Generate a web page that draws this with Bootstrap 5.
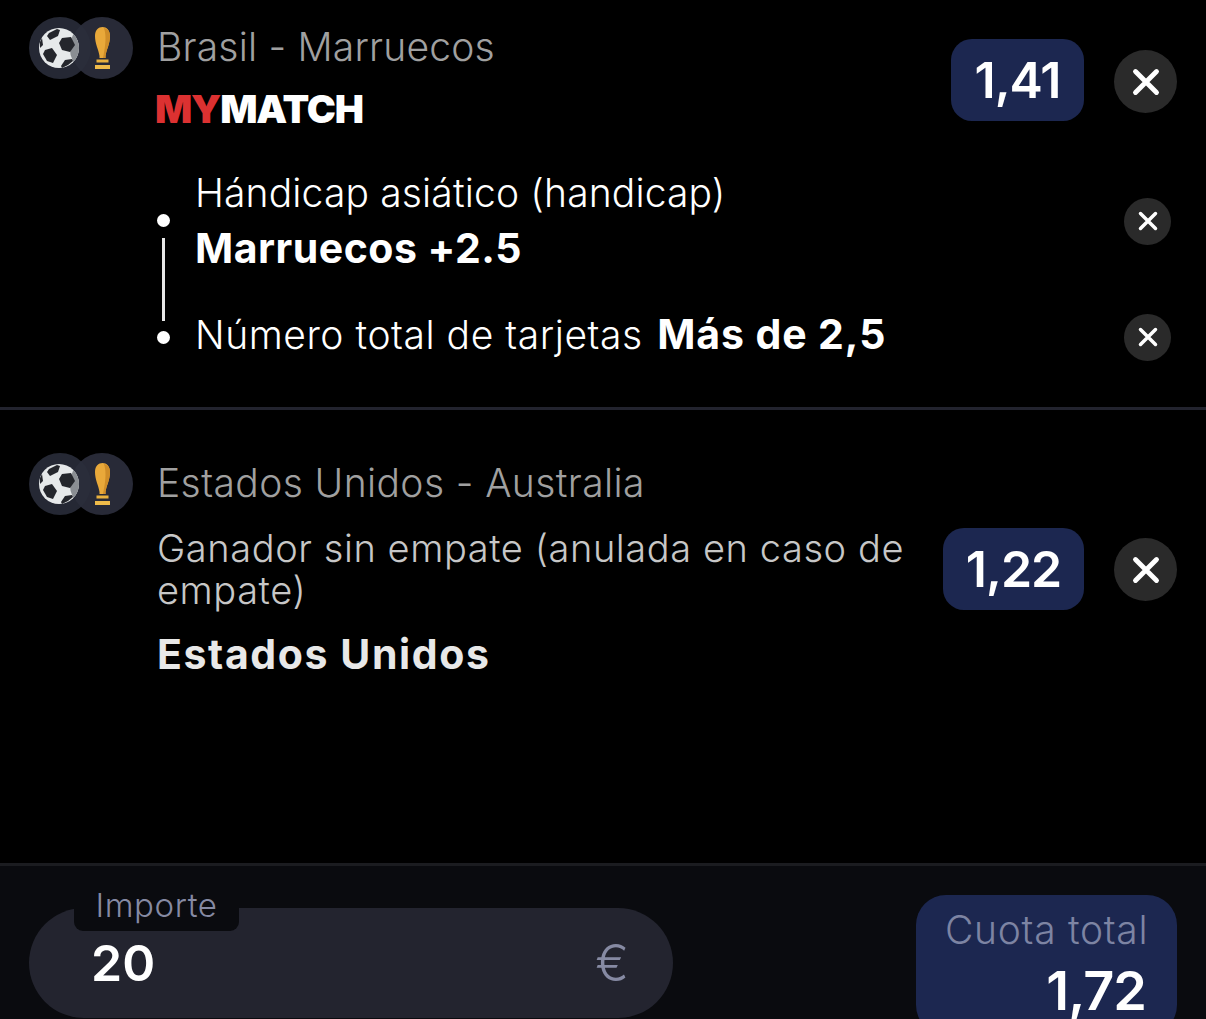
<!doctype html>
<html lang="es"><head><meta charset="utf-8">
<link href="https://cdn.jsdelivr.net/npm/bootstrap@5.3.0/dist/css/bootstrap.min.css" rel="stylesheet">
<style>
html,body{height:100%}
body{background:#000;color:#fff;font-family:Inter,"Noto Sans",sans-serif;overflow:hidden;width:1206px;height:1019px}
.page{height:1019px}
.slip{padding:17px 29px 0 29px}
.slip-one{border-bottom:3px solid #22232e;height:410px}
.slip-two{height:453px;padding-top:43px}
.sport{width:128px;flex:none;height:62px}
.disc{width:62px;height:62px;border-radius:50%;background:#282a37;display:flex;align-items:center;justify-content:center;flex:none}
.disc-a{position:relative;z-index:1;background:#2a2d3be0}
.disc-a svg{margin-left:-2px}
.disc-b{margin-left:-20px;padding-left:0}
.match{font-size:39px;line-height:60px;color:#a0a0a0;font-weight:300;letter-spacing:.2px;white-space:nowrap}
.slip-two .match{letter-spacing:.4px}
.brand{font-size:39px;font-weight:900;line-height:44px;letter-spacing:-1.2px;margin-top:10px;margin-left:-2px}
.brand span{color:#dc3131}
.odds{background:#1c2750;border-radius:21px;height:82px;font-size:50px;font-weight:600;line-height:82px;text-align:center;letter-spacing:-1px;flex:none}
.odds-a{width:133px;margin-top:22px}
.odds-b{width:141px}
.closer{width:63px;height:63px;border-radius:50%;background:#2a2a2a;flex:none;display:flex;align-items:center;justify-content:center;margin-left:30px}
.closer-top{margin-top:33px}
.closer-mid{margin-top:10px}
.closer-s{width:47px;height:47px;margin:0}
.subs{position:relative;margin-top:34px;padding-left:166px;padding-right:6px}
.subrow{position:relative;display:flex;align-items:center;justify-content:space-between}
.subrow::before{content:"";position:absolute;left:-38px;top:50%;width:13px;height:13px;margin-top:-6px;border-radius:50%;background:#fff}
.sub-a{height:110px}
.sub-a .closer{margin-top:2px}
.sub-b{height:56px;margin-top:34px}
.sub-b .sub-t{padding-bottom:4px}
.conn{position:absolute;left:132.5px;top:73px;width:3px;height:83px;background:#e8e8e8}
.sub-t{font-size:39px;line-height:56px;color:#fff;font-weight:300;letter-spacing:.15px;white-space:nowrap}
.sub-b .sub-t{letter-spacing:.55px}
.sub-s{font-size:41px;line-height:54px;font-weight:700;letter-spacing:.5px}
.sub-b .sub-s{letter-spacing:.9px;margin-left:3px}
.body-two{margin-top:13px}
.desc{font-size:38px;line-height:41.5px;color:#c7c7c7;font-weight:300;letter-spacing:.58px;width:770px}
.pick{font-size:41px;font-weight:700;line-height:44px;color:#e8e8e8;margin-top:21px;letter-spacing:1.6px}
.foot{height:156px;background:#0a0b0f;border-top:3px solid #1b1c20;position:relative;overflow:hidden;padding:29px 29px 0}
.pill{width:644px;height:110px;margin-top:13px;background:#23242f;border-radius:55px;position:relative;flex:none}
.tag{position:absolute;left:45px;top:-29px;width:165px;height:52px;background:#0a0b0f;border-radius:0 0 9px 9px;color:#868aa3;font-size:33px;line-height:52px;text-align:center;font-weight:300;letter-spacing:.6px}
.amount{font-size:50px;font-weight:600;line-height:110px;padding-left:62px}
.euro{font-size:50px;font-weight:300;color:#868aa3;padding-right:44px;line-height:110px}
.total{width:261px;height:140px;background:#1c2750;border-radius:30px;padding:10px 31px 0 29px;text-align:right;flex:none}
.total-l{font-size:39px;line-height:50px;color:#7d84a3;font-weight:300;letter-spacing:.7px;white-space:nowrap}
.total-v{font-size:54px;line-height:64px;font-weight:600;letter-spacing:-1px;margin-top:4px}
</style></head><body>
<svg width="0" height="0" class="d-block"><defs>
<symbol id="ball" viewBox="0 0 40 40">
<circle cx="20" cy="20" r="20" fill="#e6e9ea"/>
<path d="M34.3 6 A31 31 0 0 0 34.3 34 A20 20 0 0 0 34.3 6Z" fill="#8a8e93"/>
<path d="M23 10l9-1 4 8-5 7-8-2-3-7Z" fill="#24262c"/>
<path d="M6 22l7-2 5 7-4 8-6-2-4-7Z" fill="#24262c"/>
<path d="M10 5l8-4 3 1-2 6-8 4-3-4Z" fill="#24262c"/>
<path d="M22 38l4-6 7-1 1 2-5 4-6 3Z" fill="#24262c"/>
<path d="M1 14l2-4 1 7-3 3Z" fill="#24262c"/>
</symbol>
<symbol id="cup" viewBox="0 0 15 42">
<path d="M7.5 0C11.5 0 15 3 15 9c0 8-3.500 13-4.500 20v2h-6v-2C3.500 22 0 17 0 9 0 3 3.500 0 7.500 0Z" fill="#e9a93a"/>
<path d="M9 1c3 .5 6 3 6 8 0 8-3.500 13-4.500 20v2H8C10 21 12 10 9 1Z" fill="#cf8d28"/>
<rect x="1.500" y="32.500" width="12" height="3" fill="#e9b13e"/><rect x="0" y="38" width="15" height="4" fill="#efbb4a"/>
</symbol>
<symbol id="cross" viewBox="0 0 24 24"><path d="M3 3l18 18M21 3L3 21" stroke="#fff" stroke-width="4.2" stroke-linecap="round" fill="none"/></symbol>
</defs></svg>
<main class="page d-flex flex-column">
<section class="slip slip-one">
<div class="d-flex">
<div class="sport d-flex"><div class="disc disc-a"><svg width="40" height="40"><use href="#ball"/></svg></div><div class="disc disc-b"><svg width="15" height="42"><use href="#cup"/></svg></div></div>
<div class="flex-grow-1"><div class="match">Brasil - Marruecos</div><div class="brand"><span>MY</span>MATCH</div></div>
<div class="odds odds-a">1,41</div>
<div class="closer closer-top align-self-start"><svg width="28" height="28"><use href="#cross"/></svg></div>
</div>
<div class="subs">
<div class="conn"></div>
<div class="subrow sub-a"><div><div class="sub-t">Hándicap asiático (handicap)</div><div class="sub-s">Marruecos +2.5</div></div><div class="closer closer-s"><svg width="20" height="20"><use href="#cross"/></svg></div></div>
<div class="subrow sub-b"><div class="sub-t">Número total de tarjetas <span class="sub-s">Más de 2,5</span></div><div class="closer closer-s"><svg width="20" height="20"><use href="#cross"/></svg></div></div>
</div>
</section>
<section class="slip slip-two">
<div class="d-flex">
<div class="sport d-flex"><div class="disc disc-a"><svg width="40" height="40"><use href="#ball"/></svg></div><div class="disc disc-b"><svg width="15" height="42"><use href="#cup"/></svg></div></div>
<div class="flex-grow-1"><div class="match">Estados Unidos - Australia</div></div>
</div>
<div class="d-flex body-two">
<div class="sport"></div>
<div class="flex-grow-1"><div class="desc">Ganador sin empate (anulada en caso de empate)</div><div class="pick">Estados Unidos</div></div>
<div class="odds odds-b">1,22</div>
<div class="closer closer-mid align-self-start"><svg width="28" height="28"><use href="#cross"/></svg></div>
</div>
</section>
<footer class="foot d-flex justify-content-between">
<div class="pill d-flex justify-content-between"><div class="tag">Importe</div><div class="amount">20</div><div class="euro">€</div></div>
<div class="total"><div class="total-l">Cuota total</div><div class="total-v">1,72</div></div>
</footer>
</main>
</body></html>
